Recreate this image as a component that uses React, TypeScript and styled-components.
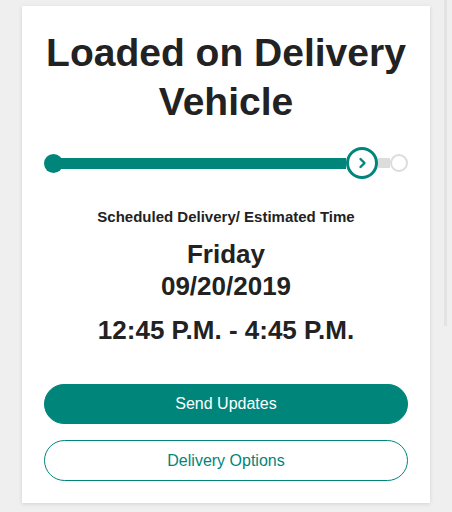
import styled, { createGlobalStyle } from "styled-components";

const TEAL = "#00857b";
const TRACK = "#dcdcdc";

const GlobalStyle = createGlobalStyle`
	html, body {
		margin: 0;
		padding: 0;
		background: #efefef;
		font-family: "Liberation Sans", Arial, Helvetica, sans-serif;
		color: #222;
	}
`;

export default function App() {
	return (
		<>
			<GlobalStyle />
			<Page>
				<Card>
					<Title>Loaded on Delivery Vehicle</Title>
					<Progress>
						<StartDot />
						<Bar $done />
						<CurrentStep>
							<svg width="16" height="16" viewBox="0 0 16 16" fill="none">
								<polyline
									points="6.5,4 10.5,8 6.5,12"
									stroke={TEAL}
									strokeWidth="2.4"
									strokeLinecap="round"
									strokeLinejoin="round"
								/>
							</svg>
						</CurrentStep>
						<Bar $width={12} />
						<EndDot />
					</Progress>
					<Subtitle>Scheduled Delivery/ Estimated Time</Subtitle>
					<DateText>
						Friday
						<br />
						09/20/2019
					</DateText>
					<TimeText>12:45 P.M. - 4:45 P.M.</TimeText>
					<Actions>
						<PillButton $primary>Send Updates</PillButton>
						<PillButton>Delivery Options</PillButton>
					</Actions>
				</Card>
			</Page>
			<ScrollThumb />
		</>
	);
}

const Page = styled.div`
	padding: 6px 22px 9px;
`;

const Card = styled.div`
	display: flex;
	flex-direction: column;
	align-items: stretch;
	background: #fff;
	height: 497px;
	box-sizing: border-box;
	padding: 22px 22px 22px;
	box-shadow: 0 1px 4px rgba(0, 0, 0, 0.12);
`;

const Title = styled.h1`
	margin: 0;
	font-size: 39px;
	line-height: 49px;
	font-weight: 700;
	text-align: center;
`;

const Progress = styled.div`
	display: flex;
	align-items: center;
	height: 32px;
	margin-top: 21px;
`;

const StartDot = styled.div`
	width: 19px;
	height: 19px;
	border-radius: 50%;
	background: ${TEAL};
	flex-shrink: 0;
	margin-right: -2px;
`;

const Bar = styled.div<{ $done?: boolean; $width?: number }>`
	height: ${({ $done }) => ($done ? 11 : 10)}px;
	background: ${({ $done }) => ($done ? TEAL : TRACK)};
	flex: ${({ $width }) => ($width ? `0 0 ${$width}px` : "1")};
`;

const CurrentStep = styled.div`
	width: 32px;
	height: 32px;
	box-sizing: border-box;
	border: 3px solid ${TEAL};
	border-radius: 50%;
	background: #fff;
	display: flex;
	align-items: center;
	justify-content: center;
	flex-shrink: 0;
`;

const EndDot = styled.div`
	width: 18px;
	height: 18px;
	box-sizing: border-box;
	border: 2px solid ${TRACK};
	border-radius: 50%;
	background: #fff;
	flex-shrink: 0;
`;

const Subtitle = styled.div`
	margin-top: 29px;
	font-size: 15px;
	line-height: 18px;
	font-weight: 700;
	text-align: center;
`;

const DateText = styled.div`
	margin-top: 12px;
	font-size: 26px;
	line-height: 32px;
	font-weight: 700;
	text-align: center;
`;

const TimeText = styled.div`
	margin-top: 13px;
	font-size: 26px;
	line-height: 30px;
	font-weight: 700;
	text-align: center;
`;

const Actions = styled.div`
	margin-top: auto;
	display: flex;
	flex-direction: column;
	gap: 16px;
`;

const PillButton = styled.button<{ $primary?: boolean }>`
	height: ${({ $primary }) => ($primary ? 40 : 41)}px;
	border-radius: 21px;
	border: 1px solid ${TEAL};
	background: ${({ $primary }) => ($primary ? TEAL : "#fff")};
	color: ${({ $primary }) => ($primary ? "#fff" : TEAL)};
	font-family: "Liberation Sans", Arial, Helvetica, sans-serif;
	font-size: 16px;
	cursor: pointer;
	padding: 0;
`;

const ScrollThumb = styled.div`
	position: fixed;
	top: 0;
	right: 5px;
	width: 3px;
	height: 326px;
	background: #e3e3e3;
`;
